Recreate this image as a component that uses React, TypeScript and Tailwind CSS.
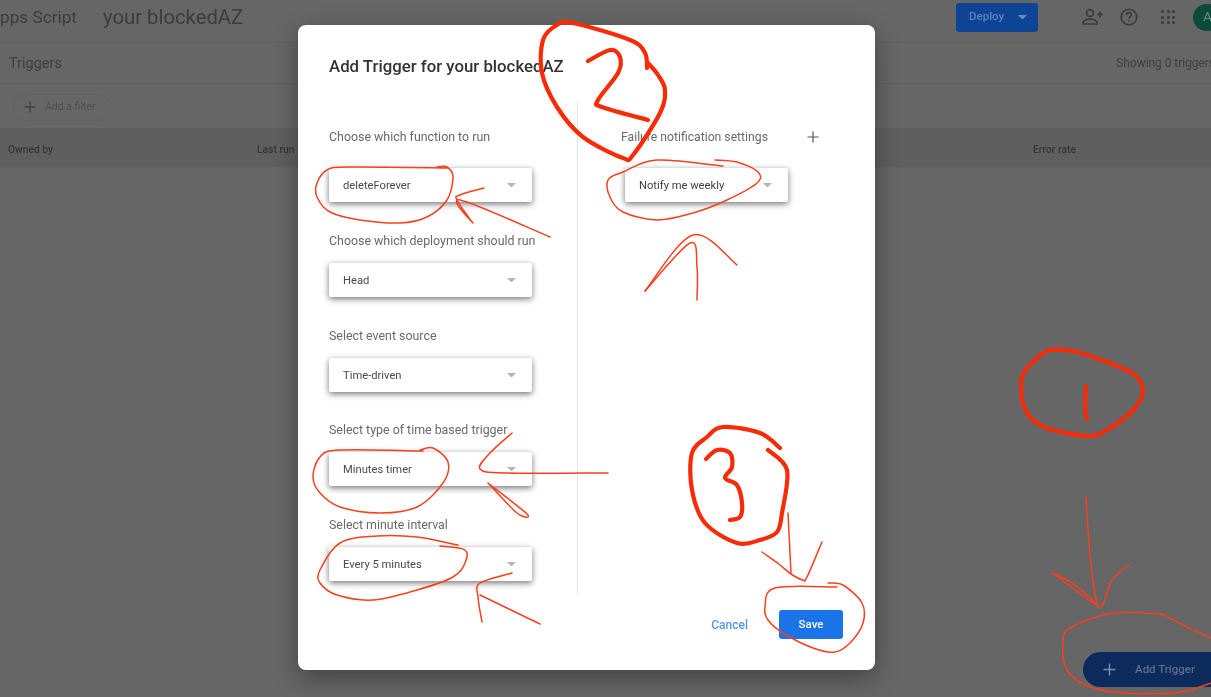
import React from "react";

type P = [number, number];

function smooth(pts: P[]): string {
  let d = `M${pts[0][0]} ${pts[0][1]}`;
  for (let i = 0; i < pts.length - 1; i++) {
    const a = pts[Math.max(i - 1, 0)];
    const b = pts[i];
    const c = pts[i + 1];
    const e = pts[Math.min(i + 2, pts.length - 1)];
    const c1x = b[0] + (c[0] - a[0]) / 6;
    const c1y = b[1] + (c[1] - a[1]) / 6;
    const c2x = c[0] - (e[0] - b[0]) / 6;
    const c2y = c[1] - (e[1] - b[1]) / 6;
    d += ` C${c1x.toFixed(1)} ${c1y.toFixed(1)} ${c2x.toFixed(1)} ${c2y.toFixed(1)} ${c[0]} ${c[1]}`;
  }
  return d;
}

const thick: P[][] = [
  [[647,68],[645,53],[630,40],[573,23],[557,25],[543,40],[542,73],[557,107],[583,137],[623,158],[633,155],[660,113],[665,90],[658,75],[648,63]],
  [[588,61],[610,50],[620,57],[618,73],[598,100],[602,107],[648,120]],
  [[780,448],[760,433],[723,427],[707,437],[692,453],[692,490],[705,523],[737,543],[760,540],[777,532],[782,513],[787,470],[768,450]],
  [[706,459],[717,450],[730,453],[732,467],[725,478],[737,485],[742,503],[740,517],[730,520]],
  [[1110,363],[1077,352],[1050,350],[1033,362],[1022,377],[1023,403],[1033,420],[1053,430],[1090,436],[1110,428],[1133,410],[1143,392],[1135,375],[1110,363]],
  [[1086,386],[1085,407],[1087,419]],
];

const thin: P[][] = [
  [[437,167],[447,167],[453,177],[447,200],[427,217],[400,223],[360,220],[330,212],[317,197],[317,183],[327,170],[350,167],[447,168]],
  [[484,188],[460,195],[457,200],[473,223],[460,200],[550,237]],
  [[715,160],[737,162],[758,172],[757,183],[727,200],[693,213],[657,220],[623,212],[610,197],[608,180],[623,172],[657,160],[723,166]],
  [[645,291],[690,243],[697,267],[697,300]],
  [[645,291],[693,235],[737,265]],
  [[420,450],[433,448],[448,462],[443,483],[417,507],[380,513],[340,507],[320,493],[313,477],[320,457],[340,450],[423,451]],
  [[512,433],[490,453],[480,469],[507,473],[608,473]],
  [[488,483],[527,514],[517,513],[488,483]],
  [[458,545],[417,537],[377,536],[340,543],[320,570],[320,583],[337,595],[373,600],[417,590],[453,577],[465,563],[465,550],[440,546]],
  [[512,573],[480,583],[478,597],[482,622]],
  [[480,595],[540,624]],
  [[828,583],[843,585],[862,603],[863,623],[850,643],[835,652],[813,648],[783,633],[768,620],[765,607],[775,588],[837,587]],
  [[788,513],[791,573]],
  [[762,552],[780,565],[791,574],[803,580],[807,577],[822,542]],
  [[1086,497],[1090,555],[1097,603],[1103,604],[1112,580],[1129,565]],
  [[1053,573],[1075,585],[1097,605],[1075,590],[1053,573]],
  [[1162,614],[1113,613],[1070,628],[1063,643],[1067,670],[1090,687],[1127,693],[1180,692],[1211,683]],
  [[1162,614],[1187,627],[1211,638]],
];

function Ink() {
  return (
    <svg className="absolute inset-0 pointer-events-none" width="1211" height="697" viewBox="0 0 1211 697" fill="none" strokeLinecap="round" strokeLinejoin="round">
      {thick.map((p, i) => (
        <path key={i} d={smooth(p)} stroke="#f72c06" strokeWidth="4.2" />
      ))}
      {thin.map((p, i) => (
        <path key={i} d={smooth(p)} stroke="#f8401f" strokeWidth="1.5" />
      ))}
    </svg>
  );
}

function Caret({ color = "#b5b5b5", w = 9 }: { color?: string; w?: number }) {
  return (
    <svg width={w} height={w / 2} viewBox="0 0 10 5" className="shrink-0">
      <path d="M0 0h10L5 5z" fill={color} />
    </svg>
  );
}

function Select({ value, className }: { value: string; className: string }) {
  return (
    <div className={`h-[34px] flex items-center justify-between pl-[14px] pr-4 bg-white rounded-[2px] shadow-[0_2px_6px_rgba(0,0,0,0.55)] text-[11.2px] text-[#4a4a4a] ${className}`}>
      <span className="pt-0.5">{value}</span>
      <Caret />
    </div>
  );
}

function Field({ label, value, top }: { label: string; value: string; top: string }) {
  return (
    <div className={top}>
      <div className="h-5 leading-5 text-[12.4px] text-[#6a6a6a]">{label}</div>
      <Select value={value} className="w-[203px] mt-3" />
    </div>
  );
}

function TopBar() {
  return (
    <header className="h-[43px] shrink-0 flex items-center border-b border-[#616161] text-[#3c3c3c]">
      <span className="text-[17.2px] w-[103px] -mt-[6px]">pps Script</span>
      <span className="text-[20.3px] -mt-2">your blockedAZ</span>
      <div className="ml-auto flex items-center h-full -mt-2">
        <div className="w-[82px] h-[29px] rounded-[3px] bg-[#0e4496] flex items-center pl-[13px] gap-[14px] text-[11.5px] font-medium text-[#5f83bd]">
          <span>Deploy</span>
          <Caret color="#6b8dc4" />
        </div>
        <svg width="24" height="24" viewBox="0 0 24 24" fill="none" stroke="#3a3a3a" strokeWidth="1.7" className="ml-[42px]">
          <circle cx="10" cy="8" r="3.4" />
          <path d="M3 19v-1c0-2.4 3.4-3.8 7-3.8s7 1.4 7 3.8v1z" />
          <path d="M17 9.5h6M20 6.5v6" />
        </svg>
        <svg width="20" height="20" viewBox="0 0 20 20" fill="none" stroke="#3a3a3a" strokeWidth="1.6" className="ml-[15px]">
          <circle cx="10" cy="10" r="7.8" />
          <path d="M7.6 8c0-1.5 1.1-2.4 2.4-2.4s2.4.9 2.4 2.2c0 1.8-2.4 1.9-2.4 3.9M10 13.2v1.4" />
        </svg>
        <div className="ml-[22px] grid grid-cols-3 gap-[2.5px]">
          {Array.from({ length: 9 }).map((_, i) => (
            <span key={i} className="w-[3px] h-[3px] rounded-full bg-[#3a3a3a]" />
          ))}
        </div>
        <div className="ml-[18px] -mr-[11px] w-[29px] h-[27px] rounded-full bg-[#0c4a3c] flex items-center justify-center text-[13px] text-[#6f8f86]">
          A
        </div>
      </div>
    </header>
  );
}

function Background() {
  return (
    <div className="h-full flex flex-col">
      <TopBar />
      <div className="h-[41px] shrink-0 flex items-center justify-between pl-[9px] pt-0.5 border-b border-[#616161] text-[#3f3f3f]">
        <span className="text-[14.5px]">Triggers</span>
        <span className="text-[11.9px] whitespace-nowrap -mr-1">Showing 0 triggers</span>
      </div>
      <div className="h-[44px] shrink-0 flex items-center pl-[13px] pt-0.5">
        <div className="h-[27px] w-[98px] rounded-full border border-[#626262] flex items-center pl-2.5 gap-[9px] text-[10.5px] text-[#505050]">
          <svg width="12" height="12" viewBox="0 0 12 12" stroke="#404040" strokeWidth="1.3">
            <path d="M6 0.5v11M0.5 6h11" />
          </svg>
          <span>Add a filter</span>
        </div>
      </div>
      <div className="h-10 shrink-0 flex items-center pt-1 bg-[#5f5f5f] border-b border-[#636363] text-[10.3px] font-medium text-[#363636]">
        <span className="pl-2 w-[257px]">Owned by</span>
        <span className="w-[776px]">Last run</span>
        <span>Error rate</span>
      </div>
      <div className="flex-1" />
      <div className="flex justify-end mb-[10px] -mr-6">
        <div className="w-[152px] h-[35px] rounded-full bg-[#0c2a5c] flex items-center pl-[20px] gap-[19px] text-[11.5px] font-medium text-[#5b6e8f]">
          <svg width="13" height="13" viewBox="0 0 13 13" stroke="#7d8fae" strokeWidth="1.4" className="shrink-0">
            <path d="M6.5 0.5v12M0.5 6.5h12" />
          </svg>
          <span>Add Trigger</span>
        </div>
      </div>
    </div>
  );
}

function Dialog() {
  return (
    <div className="absolute left-[298px] top-[25px] w-[577px] h-[645px] bg-white rounded-lg shadow-[0_8px_24px_rgba(0,0,0,0.35)] flex flex-col">
      <h2 className="pl-[31px] pt-[30px] h-[77px] text-[16.8px] leading-[22px] font-medium text-[#333]">
        Add Trigger for your blockedAZ
      </h2>
      <div className="flex h-[492px]">
        <div className="w-[280px] pl-[31px] border-r border-[#e6e6e6]">
          <div className="pt-[25px]">
            <div className="h-5 leading-5 text-[12.4px] text-[#6a6a6a]">Choose which function to run</div>
            <Select value="deleteForever" className="w-[203px] mt-[21px]" />
          </div>
          <Field top="mt-[29px]" label="Choose which deployment should run" value="Head" />
          <Field top="mt-[29px]" label="Select event source" value="Time-driven" />
          <Field top="mt-[28px]" label="Select type of time based trigger" value="Minutes timer" />
          <Field top="mt-[29px]" label="Select minute interval" value="Every 5 minutes" />
        </div>
        <div className="flex-1 pl-[43px] pt-[25px]">
          <div className="flex items-center h-5 w-[198px] justify-between text-[12.2px] text-[#6a6a6a]">
            <span>Failure notification settings</span>
            <svg width="12" height="12" viewBox="0 0 12 12" stroke="#555" strokeWidth="1.2">
              <path d="M6 0.5v11M0.5 6h11" />
            </svg>
          </div>
          <div className="mt-[21px] ml-1">
            <Select value="Notify me weekly" className="w-[163px] !text-[#3f3f3f]" />
          </div>
        </div>
      </div>
      <div className="flex items-center justify-end pr-8 mt-4">
        <span className="text-[12px] font-medium text-[#5c95ef] mr-[31px]">Cancel</span>
        <div className="w-16 h-[29px] rounded-[3px] bg-[#1b73e8] flex items-center justify-center text-[11.5px] font-medium text-white">
          Save
        </div>
      </div>
    </div>
  );
}

export default function App() {
  return (
    <div className="w-[1211px] h-[697px] overflow-hidden bg-[#666666] font-['Roboto',sans-serif]">
      <div className="relative w-full h-full blur-[0.6px]">
        <Background />
        <Dialog />
        <Ink />
      </div>
    </div>
  );
}
